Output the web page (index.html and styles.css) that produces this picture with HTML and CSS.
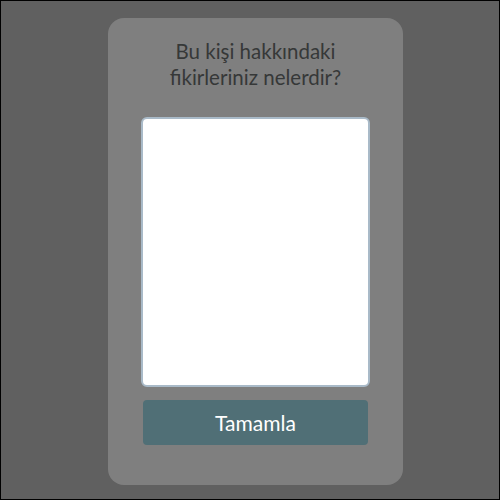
FILE: index.html
```html
<!DOCTYPE html>
<html>
<head>
<meta charset="utf-8">
<link rel="stylesheet" href="styles.css">
</head>
<body>
<div class="card">
  <h1 class="title">Bu kişi hakkındaki<br>fikirleriniz nelerdir?</h1>
  <textarea class="note"></textarea>
  <button class="done">Tamamla</button>
</div>
</body>
</html>
```
FILE: styles.css
```css
html, body {
  margin: 0;
  padding: 0;
}
body {
  width: 500px;
  height: 500px;
  box-sizing: border-box;
  border: 1px solid #000;
  background: #606060;
  padding-top: 17px;
  font-family: Lato, "Open Sans", sans-serif;
}
.card {
  margin-left: 107px;
  width: 295px;
  height: 467px;
  box-sizing: border-box;
  background: #7f7f7f;
  border-radius: 16px;
  display: flex;
  flex-direction: column;
  align-items: center;
  padding-top: 20px;
}
.title {
  margin: 0;
  font-size: 20.5px;
  font-weight: 400;
  line-height: 26px;
  color: #363838;
  text-align: center;
}
.note {
  margin-top: 27px;
  width: 229px;
  height: 270px;
  box-sizing: border-box;
  border: 2px solid #a9bac8;
  border-radius: 6px;
  background: #fff;
  resize: none;
  outline: none;
}
.done {
  margin-top: 13px;
  width: 225px;
  height: 45px;
  border: none;
  border-radius: 4px;
  background: #506f76;
  color: #fff;
  font-family: Lato, "Open Sans", sans-serif;
  font-size: 21px;
  padding: 0;
}
```
